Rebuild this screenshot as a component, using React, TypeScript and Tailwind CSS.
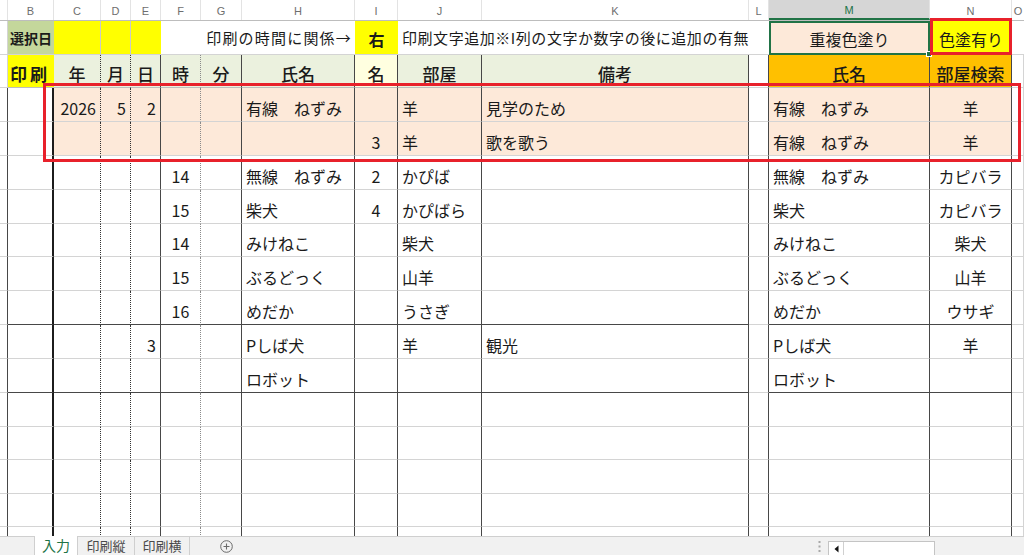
import React from 'react';

// Column widths of the sheet (A hidden sliver, B..N, and a cut-off O)
const GRID =
  'grid grid-cols-[8px_46px_47px_30px_30px_40px_41px_113px_43px_84px_267px_20px_161px_82px_12px]';

type VLine = 'none' | 'light' | 'dark' | 'thick' | 'dot' | 'dotL';
type HLine = 'none' | 'light' | 'mid' | 'dark';
type Align = 'l' | 'r' | 'c';

const V: Record<VLine, string> = {
  none: '',
  light: 'border-r border-r-[#d4d4d4]',
  dark: 'border-r border-r-[#474747]',
  thick: 'border-r-2 border-r-[#1c1c1c]',
  dot: 'border-r border-r-[#333333] [border-right-style:dotted]!',
  dotL: 'border-r border-r-[#8a8a8a] [border-right-style:dotted]!',
};

const H: Record<HLine, string> = {
  none: '',
  light: 'border-b border-b-[#d4d4d4]',
  mid: 'border-b border-b-[#bdbdbd]',
  dark: 'border-b border-b-[#474747]',
};

const AL: Record<Align, string> = {
  l: 'justify-start pl-[4px]',
  r: 'justify-end pr-[4px]',
  c: 'justify-center',
};

// vertical borders for the body and for the header row
const bodyV: VLine[] = ['dark', 'thick', 'dot', 'dot', 'dark', 'dotL', 'dark', 'dark', 'dark', 'dark', 'dark', 'dark', 'dark', 'dark', 'light'];
const headV: VLine[] = ['light', 'none', 'dot', 'dot', 'dark', 'dotL', 'dark', 'dark', 'dark', 'dark', 'dark', 'dark', 'dark', 'dark', 'light'];

const lightB: HLine[] = Array(15).fill('light');
const groupB: HLine[] = ['light', 'dark', 'dark', 'dark', 'dark', 'dark', 'dark', 'dark', 'dark', 'dark', 'dark', 'light', 'dark', 'dark', 'light'];

const colAlign: Record<number, Align> = { 2: 'r', 3: 'r', 4: 'r', 5: 'c', 7: 'l', 8: 'c', 9: 'l', 10: 'l', 12: 'l', 13: 'c' };

const rows: { cells: Record<number, string>; peach?: boolean; end?: boolean; h: string }[] = [
  { cells: { 2: '2026', 3: '5', 4: '2', 7: '有線　ねずみ', 9: '羊', 10: '見学のため', 12: '有線　ねずみ', 13: '羊' }, peach: true, h: 'h-[34px]' },
  { cells: { 8: '3', 9: '羊', 10: '歌を歌う', 12: '有線　ねずみ', 13: '羊' }, peach: true, h: 'h-[34px]' },
  { cells: { 5: '14', 7: '無線　ねずみ', 8: '2', 9: 'かぴば', 12: '無線　ねずみ', 13: 'カピバラ' }, h: 'h-[34px]' },
  { cells: { 5: '15', 7: '柴犬', 8: '4', 9: 'かぴばら', 12: '柴犬', 13: 'カピバラ' }, h: 'h-[34px]' },
  { cells: { 5: '14', 7: 'みけねこ', 9: '柴犬', 12: 'みけねこ', 13: '柴犬' }, h: 'h-[33px]' },
  { cells: { 5: '15', 7: 'ぶるどっく', 9: '山羊', 12: 'ぶるどっく', 13: '山羊' }, h: 'h-[34px]' },
  { cells: { 5: '16', 7: 'めだか', 9: 'うさぎ', 12: 'めだか', 13: 'ウサギ' }, end: true, h: 'h-[34px]' },
  { cells: { 4: '3', 7: 'Pしば犬', 9: '羊', 10: '観光', 12: 'Pしば犬', 13: '羊' }, h: 'h-[34px]' },
  { cells: { 7: 'ロボット', 12: 'ロボット' }, end: true, h: 'h-[34px]' },
  { cells: {}, h: 'h-[34px]' },
  { cells: {}, h: 'h-[33px]' },
  { cells: {}, h: 'h-[34px]' },
  { cells: {}, h: 'h-[33px]' },
  { cells: {}, h: 'h-[34px]' },
];

const letters = ['', 'B', 'C', 'D', 'E', 'F', 'G', 'H', 'I', 'J', 'K', 'L', 'M', 'N', 'O'];

function ColumnHeader() {
  return (
    <div className={`${GRID} h-[21px] border-b border-b-[#bdbdbd]`}>
      {letters.map((l, i) => (
        <div
          key={i}
          className={`flex items-center justify-center overflow-hidden pt-[3px] text-[11px] font-['Liberation_Sans',sans-serif] ${
            i === 12 ? 'bg-[#d6d6d6] text-[#217346] border-b-2 border-b-[#217346]' : 'text-[#6e6e6e]'
          } ${i < 14 ? 'border-r border-r-[#e3e3e3]' : ''}`}
        >
          {l}
        </div>
      ))}
    </div>
  );
}

function TopRow() {
  return (
    <div className={`${GRID} h-[34px]`}>
      <div className="border-r border-r-[#d4d4d4] border-b border-b-[#d4d4d4]" />
      <div className="flex items-center pl-[2px] pt-[2px] bg-[#c4d79b] border-b border-b-[#d4d4d4] text-[14px] font-bold">選択日</div>
      <div className="bg-[#ffff00] border-r border-r-[#c9c9c9] border-b border-b-[#d4d4d4]" />
      <div className="bg-[#ffff00] border-r border-r-[#c9c9c9] border-b border-b-[#d4d4d4]" />
      <div className="bg-[#ffff00] border-b border-b-[#d4d4d4]" />
      <div className="col-span-3 flex items-center justify-end pr-[3px] pt-[2px] border-b border-b-[#d4d4d4] text-[15px] tracking-[1.2px] whitespace-nowrap">
        印刷の時間に関係→
      </div>
      <div className="flex items-center justify-center pt-[2px] bg-[#ffff00] border-b border-b-[#d4d4d4] text-[16px] font-bold">右</div>
      <div className="col-span-2 flex items-center pl-[4px] pt-[2px] border-b border-b-[#d4d4d4] text-[15px] tracking-[0.55px] whitespace-nowrap overflow-visible">
        印刷文字追加※I列の文字か数字の後に追加の有無
      </div>
      <div className="border-b border-b-[#d4d4d4]" />
      <div className="relative flex items-center justify-center pt-[2px] bg-[#fde9d9] border-2 border-[#217346] text-[16px]">
        重複色塗り
        <div className="absolute -right-[4px] -bottom-[4px] w-[6px] h-[6px] bg-[#217346] border border-white" />
      </div>
      <div className="flex items-center justify-center pt-[2px] bg-[#ffff00] border-b border-b-[#d4d4d4] text-[16px]">色塗有り</div>
      <div className="border-b border-b-[#d4d4d4]" />
    </div>
  );
}

const headCells: Record<number, string> = { 2: '年', 3: '月', 4: '日', 5: '時', 6: '分', 7: '氏名', 8: '名', 9: '部屋', 10: '備考', 12: '氏名', 13: '部屋検索' };

function headBg(i: number) {
  if (i === 1) return 'bg-[#ffff00]';
  if (i === 8) return 'bg-[#ffffe0]';
  if (i >= 2 && i <= 10) return 'bg-[#ebf1de]';
  if (i === 12 || i === 13) return 'bg-[#ffc000]';
  return '';
}

function HeadRow() {
  return (
    <div className={`${GRID} h-[33px]`}>
      {headV.map((v, i) => (
        <div
          key={i}
          className={`flex items-center pt-[5px] ${V[v]} ${H[i === 0 || i === 11 || i === 14 ? 'light' : 'mid'] } ${headBg(i)} ${
            i === 1 ? 'justify-start pl-[2px] text-[17px] font-bold tracking-[3px]' : 'justify-center text-[17px] font-medium'
          }`}
        >
          {i === 1 ? '印刷' : headCells[i]}
        </div>
      ))}
    </div>
  );
}

function DataRow({ r }: { r: (typeof rows)[number] }) {
  const bottom = r.end ? groupB : lightB;
  return (
    <div className={`${GRID} ${r.h}`}>
      {bodyV.map((v, i) => {
        const peach = r.peach && ((i >= 2 && i <= 10) || i === 12 || i === 13);
        return (
          <div
            key={i}
            className={`flex items-center pt-[6px] whitespace-nowrap text-[16px] ${V[v]} ${H[bottom[i]]} ${peach ? 'bg-[#fde9d9]' : ''} ${
              AL[colAlign[i] ?? 'l']
            }`}
          >
            {r.cells[i]}
          </div>
        );
      })}
    </div>
  );
}

function TabBar() {
  return (
    <div className="h-[19px] flex bg-[#f1f1f1] border-t border-t-[#cfcfcf] text-[13px] text-[#4a4a4a]">
      <div className="w-[35px] border-r border-r-[#cfcfcf]" />
      <div className="w-[43px] -mt-px bg-white flex items-center justify-center text-[#217346] text-[14px] border-r border-r-[#cfcfcf]">
        入力
      </div>
      <div className="w-[57px] flex items-center justify-center border-r border-r-[#cfcfcf]">印刷縦</div>
      <div className="w-[55px] flex items-center justify-center border-r border-r-[#cfcfcf]">印刷横</div>
      <div className="w-[30px]" />
      <div className="flex items-center">
        <svg width="13" height="13" viewBox="0 0 13 13">
          <circle cx="6.5" cy="6.5" r="5.8" fill="none" stroke="#6a6a6a" strokeWidth="1" />
          <path d="M6.5 3.5v6M3.5 6.5h6" stroke="#6a6a6a" strokeWidth="1.1" />
        </svg>
      </div>
      <div className="flex-1" />
      <div className="w-[18px] flex items-center justify-center">
        <svg width="3" height="11" viewBox="0 0 3 11">
          <rect x="0.5" y="0" width="2" height="2" fill="#a8a8a8" />
          <rect x="0.5" y="4.5" width="2" height="2" fill="#a8a8a8" />
          <rect x="0.5" y="9" width="2" height="2" fill="#a8a8a8" />
        </svg>
      </div>
      <div className="w-[107px] mt-[4px] bg-white border border-[#c4c4c4] border-b-0 flex">
        <div className="w-[15px] border-r border-r-[#d0d0d0] flex items-center justify-center">
          <svg width="5" height="8" viewBox="0 0 5 8">
            <path d="M4.5 0.5v7L0.5 4z" fill="#111" />
          </svg>
        </div>
      </div>
      <div className="w-[89px]" />
    </div>
  );
}

export default function App() {
  return (
    <div className="w-[1024px] h-[555px] overflow-hidden bg-white flex flex-col font-['Noto_Sans_CJK_JP',sans-serif] text-[#1a1a1a]">
      <div className="relative flex-1 overflow-hidden">
        <ColumnHeader />
        <TopRow />
        <HeadRow />
        {rows.map((r, i) => (
          <DataRow key={i} r={r} />
        ))}
        {/* red highlight frames */}
        <div className="absolute left-[43px] top-[83px] w-[978px] h-[79px] border-[3px] border-[#e8212b]" />
        <div className="absolute left-[930px] top-[18px] w-[82px] h-[37px] border-[3px] border-[#e8212b]" />
      </div>
      <TabBar />
    </div>
  );
}
